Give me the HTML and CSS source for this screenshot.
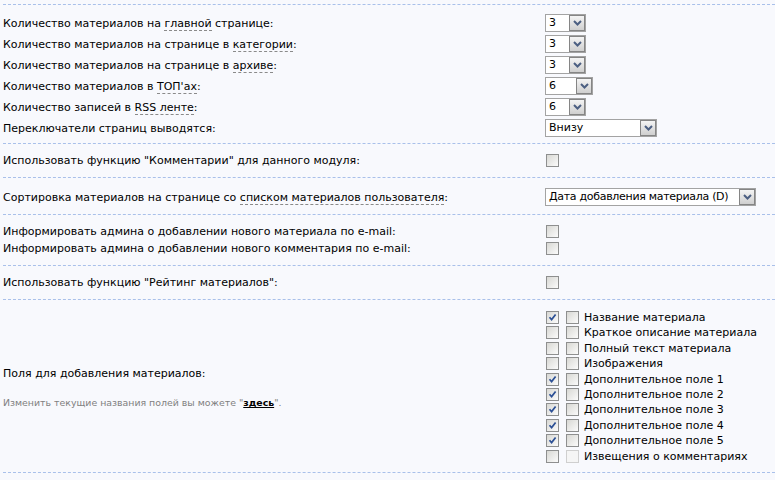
FILE: index.html
```html
<!DOCTYPE html>
<html lang="ru">

<head>
    <meta charset="UTF-8">
    <title>Настройки модуля</title>
    <link rel="stylesheet" href="styles.css">
</head>

<body>

    <div class="settings">

        <div class="section first">
            <div class="row">
                <div class="label">Количество материалов на <span class="term">главной</span> странице:</div>
                <div class="value"><span class="select w41"><span class="select-val">3</span><span class="select-btn"><svg width="9" height="6" viewBox="0 0 9 6"><polyline points="1,1 4.5,4.5 8,1" /></svg></span></span></div>
            </div>
            <div class="row">
                <div class="label">Количество материалов на странице в <span class="term">категории</span>:</div>
                <div class="value"><span class="select w41"><span class="select-val">3</span><span class="select-btn"><svg width="9" height="6" viewBox="0 0 9 6"><polyline points="1,1 4.5,4.5 8,1" /></svg></span></span></div>
            </div>
            <div class="row">
                <div class="label">Количество материалов на странице в <span class="term">архиве</span>:</div>
                <div class="value"><span class="select w41"><span class="select-val">3</span><span class="select-btn"><svg width="9" height="6" viewBox="0 0 9 6"><polyline points="1,1 4.5,4.5 8,1" /></svg></span></span></div>
            </div>
            <div class="row">
                <div class="label">Количество материалов в <span class="term">ТОП'ах</span>:</div>
                <div class="value"><span class="select w48"><span class="select-val">6</span><span class="select-btn"><svg width="9" height="6" viewBox="0 0 9 6"><polyline points="1,1 4.5,4.5 8,1" /></svg></span></span></div>
            </div>
            <div class="row">
                <div class="label">Количество записей в <span class="term">RSS ленте</span>:</div>
                <div class="value"><span class="select w41"><span class="select-val">6</span><span class="select-btn"><svg width="9" height="6" viewBox="0 0 9 6"><polyline points="1,1 4.5,4.5 8,1" /></svg></span></span></div>
            </div>
            <div class="row">
                <div class="label">Переключатели страниц выводятся:</div>
                <div class="value"><span class="select w112"><span class="select-val">Внизу</span><span class="select-btn"><svg width="9" height="6" viewBox="0 0 9 6"><polyline points="1,1 4.5,4.5 8,1" /></svg></span></span></div>
            </div>
        </div>

        <div class="section">
            <div class="row">
                <div class="label">Использовать функцию "Комментарии" для данного модуля:</div>
                <div class="value"><span class="checkbox"></span></div>
            </div>
        </div>

        <div class="section sort">
            <div class="row">
                <div class="label">Сортировка материалов на странице со <span class="term">списком материалов пользователя</span>:</div>
                <div class="value"><span class="select w211"><span class="select-val">Дата добавления материала (D)</span><span class="select-btn"><svg width="9" height="6" viewBox="0 0 9 6"><polyline points="1,1 4.5,4.5 8,1" /></svg></span></span></div>
            </div>
        </div>

        <div class="section">
            <div class="row gap">
                <div class="label">Информировать админа о добавлении нового материала по e-mail:</div>
                <div class="value"><span class="checkbox"></span></div>
            </div>
            <div class="row">
                <div class="label">Информировать админа о добавлении нового комментария по e-mail:</div>
                <div class="value"><span class="checkbox"></span></div>
            </div>
        </div>

        <div class="section">
            <div class="row">
                <div class="label">Использовать функцию "Рейтинг материалов":</div>
                <div class="value"><span class="checkbox"></span></div>
            </div>
        </div>

        <div class="section fields">
            <div class="row">
                <div class="label">
                    <div>Поля для добавления материалов:</div>
                    <div class="hint">Изменить текущие названия полей вы можете "<a href="#">здесь</a>".</div>
                </div>
                <div class="value" id="fieldList"></div>
            </div>
        </div>

    </div>

    <script>
        const fields = [
            { name: 'Название материала', shown: true, required: false },
            { name: 'Краткое описание материала', shown: false, required: false },
            { name: 'Полный текст материала', shown: false, required: false },
            { name: 'Изображения', shown: false, required: false },
            { name: 'Дополнительное поле 1', shown: true, required: false },
            { name: 'Дополнительное поле 2', shown: true, required: false },
            { name: 'Дополнительное поле 3', shown: true, required: false },
            { name: 'Дополнительное поле 4', shown: true, required: false },
            { name: 'Дополнительное поле 5', shown: true, required: false },
            { name: 'Извещения о комментариях', shown: false, required: false, disabled: true }
        ];

        const check = '<svg width="9" height="9" viewBox="0 0 9 9"><polyline points="1.5,4.2 3.6,6.6 7.6,1.4" /></svg>';

        function renderFields() {
            const list = document.getElementById('fieldList');
            list.innerHTML = '';

            fields.forEach((field) => {
                const item = document.createElement('div');
                item.className = 'field-item';
                item.innerHTML = `
                    <span class="checkbox">${field.shown ? check : ''}</span>
                    <span class="checkbox${field.disabled ? ' disabled' : ''}">${field.required ? check : ''}</span>
                    <span class="field-name">${field.name}</span>
                `;
                list.appendChild(item);
            });
        }

        renderFields();
    </script>
</body>

</html>
```

FILE: styles.css
```css
body {
    font-family: 'DejaVu Sans', Verdana, sans-serif;
    font-size: 11px;
    margin: 0;
    padding: 0;
    background-color: #f8f9fd;
    color: #000;
}

.settings {
    padding: 4px 0 0 3px;
}

.section {
    border-bottom: 1px dashed #a9c0ea;
    padding: 10px 0;
}

.section.first {
    border-top: 1px dashed #a9c0ea;
    padding: 9px 0 3px;
}

.section.first .row {
    height: 18px;
    margin-bottom: 3px;
}

.section.sort {
    padding-bottom: 8px;
}

.section.fields {
    padding: 11px 0 7px;
}

.row {
    display: grid;
    grid-template-columns: 542px 1fr;
    align-items: center;
}

.row.gap {
    margin-bottom: 4px;
}

.label {
    line-height: 13px;
    white-space: nowrap;
}

.value {
    display: flex;
    flex-direction: column;
}

.term {
    border-bottom: 1px dashed #8a8a8a;
}

.hint {
    margin-top: 16px;
    font-size: 9.4px;
    color: #808080;
}

.hint a {
    color: #000;
    font-weight: bold;
    text-decoration: underline;
}

/* select boxes */
.select {
    display: flex;
    box-sizing: border-box;
    height: 18px;
    border: 1px solid #a3a3a3;
    background-color: #fff;
}

.select.w41 {
    width: 41px;
}

.select.w48 {
    width: 48px;
}

.select.w112 {
    width: 112px;
}

.select.w211 {
    width: 211px;
}

.select.w211 .select-val {
    letter-spacing: -0.3px;
}

.select-val {
    flex-grow: 1;
    padding-left: 3px;
    line-height: 16px;
    white-space: nowrap;
    overflow: hidden;
}

.select-btn {
    display: flex;
    align-items: center;
    justify-content: center;
    flex-shrink: 0;
    box-sizing: border-box;
    width: 16px;
    height: 16px;
    border: 1px solid #858585;
    background: linear-gradient(#f4f4f4, #cfcfcf);
}

.select-btn polyline {
    fill: none;
    stroke: #4c5f82;
    stroke-width: 2;
}

/* checkboxes */
.checkbox {
    display: flex;
    align-items: center;
    justify-content: center;
    box-sizing: border-box;
    width: 13px;
    height: 13px;
    margin-left: 1px;
    border: 1px solid #8e8f8f;
    background: linear-gradient(135deg, #d8d8d4, #fbfbfb);
}

.checkbox polyline {
    fill: none;
    stroke: #2b4f95;
    stroke-width: 1.7;
}

.checkbox.disabled {
    border-color: #cfcfcf;
    background: #f5f5f5;
}

.field-item {
    display: flex;
    align-items: flex-start;
    height: 15.4px;
}

.field-item .checkbox + .checkbox {
    margin-left: 7px;
}

.field-name {
    margin-left: 5px;
    line-height: 13px;
    white-space: nowrap;
}
```
